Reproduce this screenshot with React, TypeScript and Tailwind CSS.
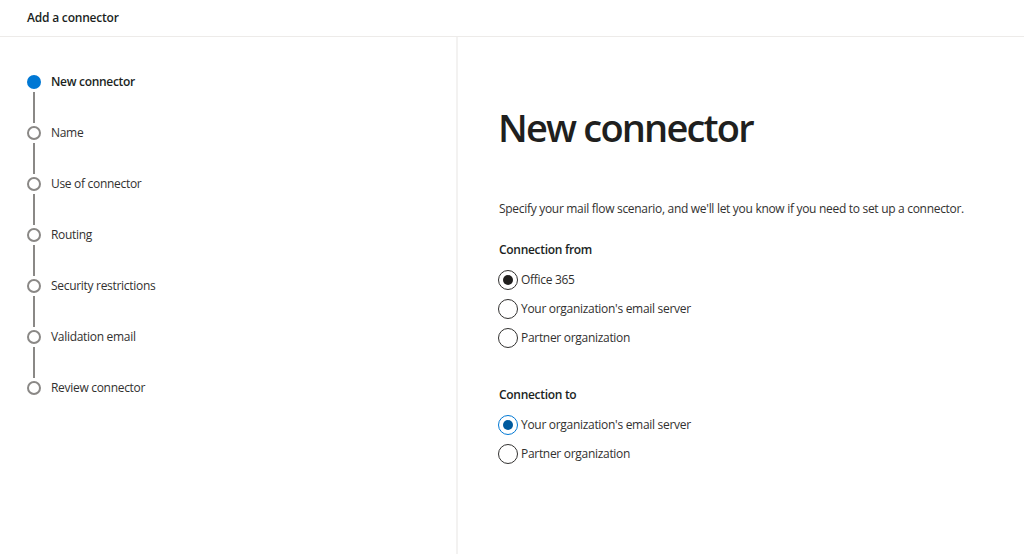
import React from "react";

const steps = [
  "New connector",
  "Name",
  "Use of connector",
  "Routing",
  "Security restrictions",
  "Validation email",
  "Review connector",
];

function Radio({ label, state }: { label: string; state: "none" | "black" | "blue" }) {
  const border =
    state === "blue" ? "border-[#0078d4]" : "border-[#323130]";
  return (
    <div className="flex items-center h-[29px]">
      <div className={`w-[20px] h-[20px] rounded-full border ${border} flex items-center justify-center bg-white`}>
        {state === "black" && <div className="w-[10px] h-[10px] rounded-full bg-[#201f1e]" />}
        {state === "blue" && <div className="w-[10px] h-[10px] rounded-full bg-[#005a9e]" />}
      </div>
      <span className="ml-[3px] text-[12px] tracking-[-0.3px] text-[#323130]">{label}</span>
    </div>
  );
}

export default function App() {
  return (
    <div
      className="w-[1024px] h-[554px] bg-white flex flex-col overflow-hidden"
      style={{ fontFamily: '"Open Sans", "Noto Sans", sans-serif' }}
    >
      <div className="h-[37px] border-b border-[#edebe9] flex items-center px-[27px] shrink-0">
        <span className="text-[12px] tracking-[-0.2px] font-semibold text-[#201f1e]">Add a connector</span>
      </div>
      <div className="flex flex-1 min-h-0">
        <div className="w-[458px] border-r-2 border-[#f3f2f1] pt-[38px] pl-[27px] shrink-0">
          {steps.map((s, i) => (
            <div key={s} className="flex flex-col">
              <div className="flex items-center h-[14px]">
                {i === 0 ? (
                  <div className="w-[14px] h-[14px] rounded-full bg-[#0078d4]" />
                ) : (
                  <div className="w-[14px] h-[14px] rounded-full border-2 border-[#8a8886] bg-white" />
                )}
                <span
                  className={`ml-[10px] text-[12px] tracking-[-0.3px] ${i === 0 ? "font-semibold text-[#201f1e]" : "text-[#323130]"}`}
                >
                  {s}
                </span>
              </div>
              {i < steps.length - 1 && (
                <div className="w-[14px] flex justify-center py-[3px]">
                  <div className="w-[2px] h-[31px] bg-[#8a8886]" />
                </div>
              )}
            </div>
          ))}
        </div>
        <div className="flex-1 pl-[40px] pt-[66px]">
          <h1 className="text-[38px] leading-[48px] font-semibold text-[#201f1e] tracking-[-1.8px]">New connector</h1>
          <p className="mt-[49px] ml-[1px] text-[12px] tracking-[-0.3px] text-[#323130]">
            Specify your mail flow scenario, and we'll let you know if you need to set up a connector.
          </p>
          <div className="mt-[23px] ml-[1px] text-[12px] tracking-[-0.3px] font-semibold text-[#201f1e]">Connection from</div>
          <div className="mt-[6px]">
            <Radio label="Office 365" state="black" />
            <Radio label="Your organization's email server" state="none" />
            <Radio label="Partner organization" state="none" />
          </div>
          <div className="mt-[34px] ml-[1px] text-[12px] tracking-[-0.3px] font-semibold text-[#201f1e]">Connection to</div>
          <div className="mt-[6px]">
            <Radio label="Your organization's email server" state="blue" />
            <Radio label="Partner organization" state="none" />
          </div>
        </div>
      </div>
    </div>
  );
}
